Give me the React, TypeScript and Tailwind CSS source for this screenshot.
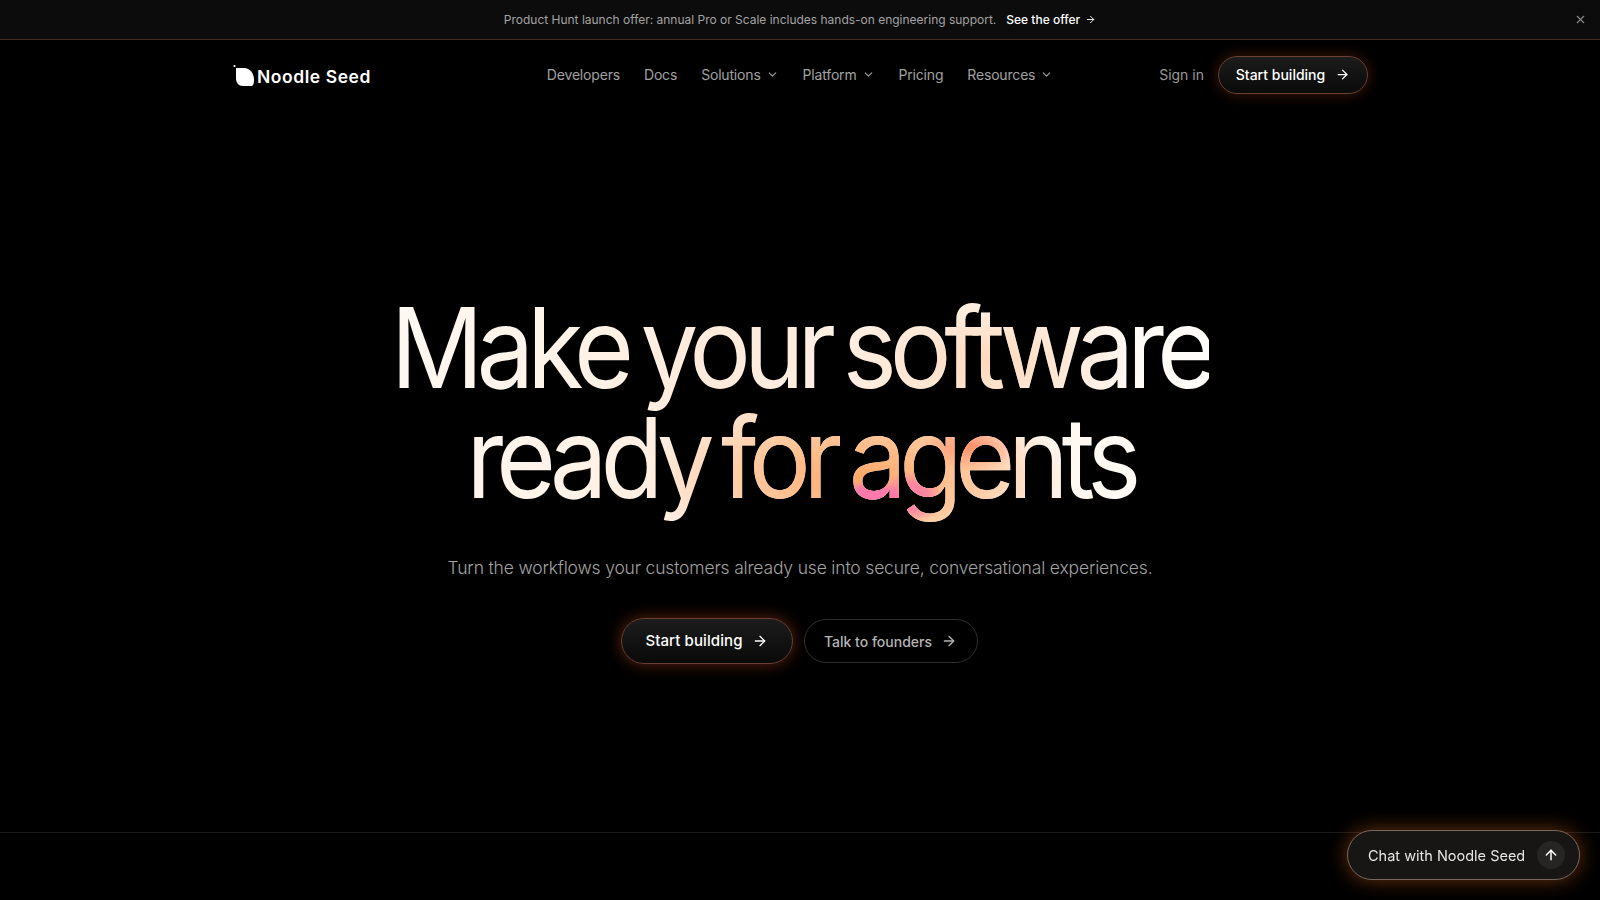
import { ArrowRight, ArrowUp, ChevronDown, X } from "lucide-react";

const links = [
  { label: "Developers" },
  { label: "Docs" },
  { label: "Solutions", menu: true },
  { label: "Platform", menu: true },
  { label: "Pricing" },
  { label: "Resources", menu: true },
];

function Logo() {
  return (
    <div className="flex items-end">
      <svg width="26" height="24" viewBox="0 0 26 24" className="mb-[1px] shrink-0">
        <circle cx="2.5" cy="2" r="1.1" fill="#fff" />
        <path d="M4 4 H12 C18 4 22 9.5 22 16 C22 20 21 22 19 22 H11 C6.5 22 4 18.5 4 14 Z" fill="#fff" />
      </svg>
      <span className="mb-[1px] ml-[-1px] text-[17.5px] leading-[22px] font-semibold tracking-[0.55px] text-white">
        Noodle Seed
      </span>
    </div>
  );
}

export default function App() {
  return (
    <div className="flex min-h-[900px] flex-col overflow-hidden bg-black font-['Inter',sans-serif] text-white antialiased">
      <div className="relative flex h-[40px] items-center justify-center border-b border-[#4a2a1c] bg-[#0c0c0c] text-[12px]">
        <span className="tracking-[-0.01px] text-[#a3a3a3]">
          Product Hunt launch offer: annual Pro or Scale includes hands-on engineering support.
        </span>
        <span className="ml-[10px] flex items-center gap-[5px] font-medium text-white">
          See the offer <ArrowRight size={11} />
        </span>
        <X size={13} className="absolute right-[13px] top-[13px] text-[#8a8a8a]" />
      </div>

      <nav className="mx-auto flex h-[70px] w-[1136px] items-center justify-between">
        <div className="w-[209px] pt-[2px]">
          <Logo />
        </div>
        <div className="flex items-center gap-[24px] pb-[2px] text-[14px] tracking-[-0.18px] text-[#a1a1a1]">
          {links.map((l) => (
            <span key={l.label} className="flex items-center gap-[5px]">
              {l.label}
              {l.menu && <ChevronDown size={13} />}
            </span>
          ))}
        </div>
        <div className="flex items-center gap-[14px]">
          <span className="pb-[2px] text-[14px] text-[#9a9a9a]">Sign in</span>
          <button className="flex h-[38px] w-[150px] items-center justify-center gap-[10px] rounded-full border border-[#6b4030] bg-gradient-to-b from-[#1c1c1c] to-[#0a0a0a] pb-[1px] text-[14px] font-medium text-white shadow-[0_0_14px_rgba(234,88,40,0.28)]">
            Start building <ArrowRight size={15} />
          </button>
        </div>
      </nav>

      <main className="flex flex-1 flex-col items-center border-b border-[#1a1a1a] pt-[182px]">
        <h1 className="scale-x-[0.92] whitespace-nowrap bg-[radial-gradient(ellipse_41px_20px_at_522px_208px,#ff78ae_0%,#ff78ae_60%,transparent_100%),radial-gradient(ellipse_37px_26px_at_565px_205px,#ff78ae_0%,#ff86a0_50%,transparent_100%),radial-gradient(ellipse_54px_24px_at_630px_155px,#ff8f6a_0%,transparent_100%),radial-gradient(ellipse_228px_90px_at_511px_185px,#ffa868_0%,#ffc99f_55%,transparent_100%),radial-gradient(ellipse_163px_70px_at_652px_70px,#ffd8bb_0%,transparent_100%),linear-gradient(to_right,#fff8f2_0%,#fff2e6_25%,#ffeadb_40%,#fff4ea_70%,#fffdfa_100%)] bg-clip-text pb-[16px] text-center text-[112px] leading-[110px] font-normal tracking-[-7.9px] [word-spacing:-8.7px] text-transparent">
          Make your software
          <br />
          ready for agents
        </h1>
        <p className="mt-[26px] text-[17.5px] leading-[28px] font-light tracking-[-0.17px] text-[#a3a3a3]">
          Turn the workflows your customers already use into secure, conversational experiences.
        </p>
        <div className="mt-[36px] flex items-center gap-[11px] pr-[2px]">
          <button className="flex h-[46px] w-[172px] items-center justify-center gap-[9px] rounded-full border border-[#6b4030] bg-gradient-to-b from-[#1c1c1c] to-[#0a0a0a] text-[15px] font-medium tracking-[0.1px] text-white shadow-[0_0_16px_rgba(234,88,40,0.4)]">
            Start building <ArrowRight size={16} />
          </button>
          <button className="flex h-[44px] w-[174px] items-center justify-center gap-[9px] rounded-full border border-[#2e2e2e] text-[14px] font-medium text-[#b5b5b5]">
            Talk to founders <ArrowRight size={16} />
          </button>
        </div>
      </main>
      <div className="h-[67px]" />

      <button className="fixed bottom-[20px] right-[20px] flex h-[50px] w-[233px] items-center justify-between rounded-full border border-[#77675c] bg-[#171615] pl-[20px] pr-[14px] text-[14.5px] text-[#e5e5e5] shadow-[0_0_20px_rgba(234,110,30,0.45)]">
        <span className="pt-[1px]">Chat with Noodle Seed</span>
        <span className="flex h-[28px] w-[28px] items-center justify-center rounded-full bg-[#262524]">
          <ArrowUp size={16} strokeWidth={2.25} className="text-white" />
        </span>
      </button>
    </div>
  );
}
